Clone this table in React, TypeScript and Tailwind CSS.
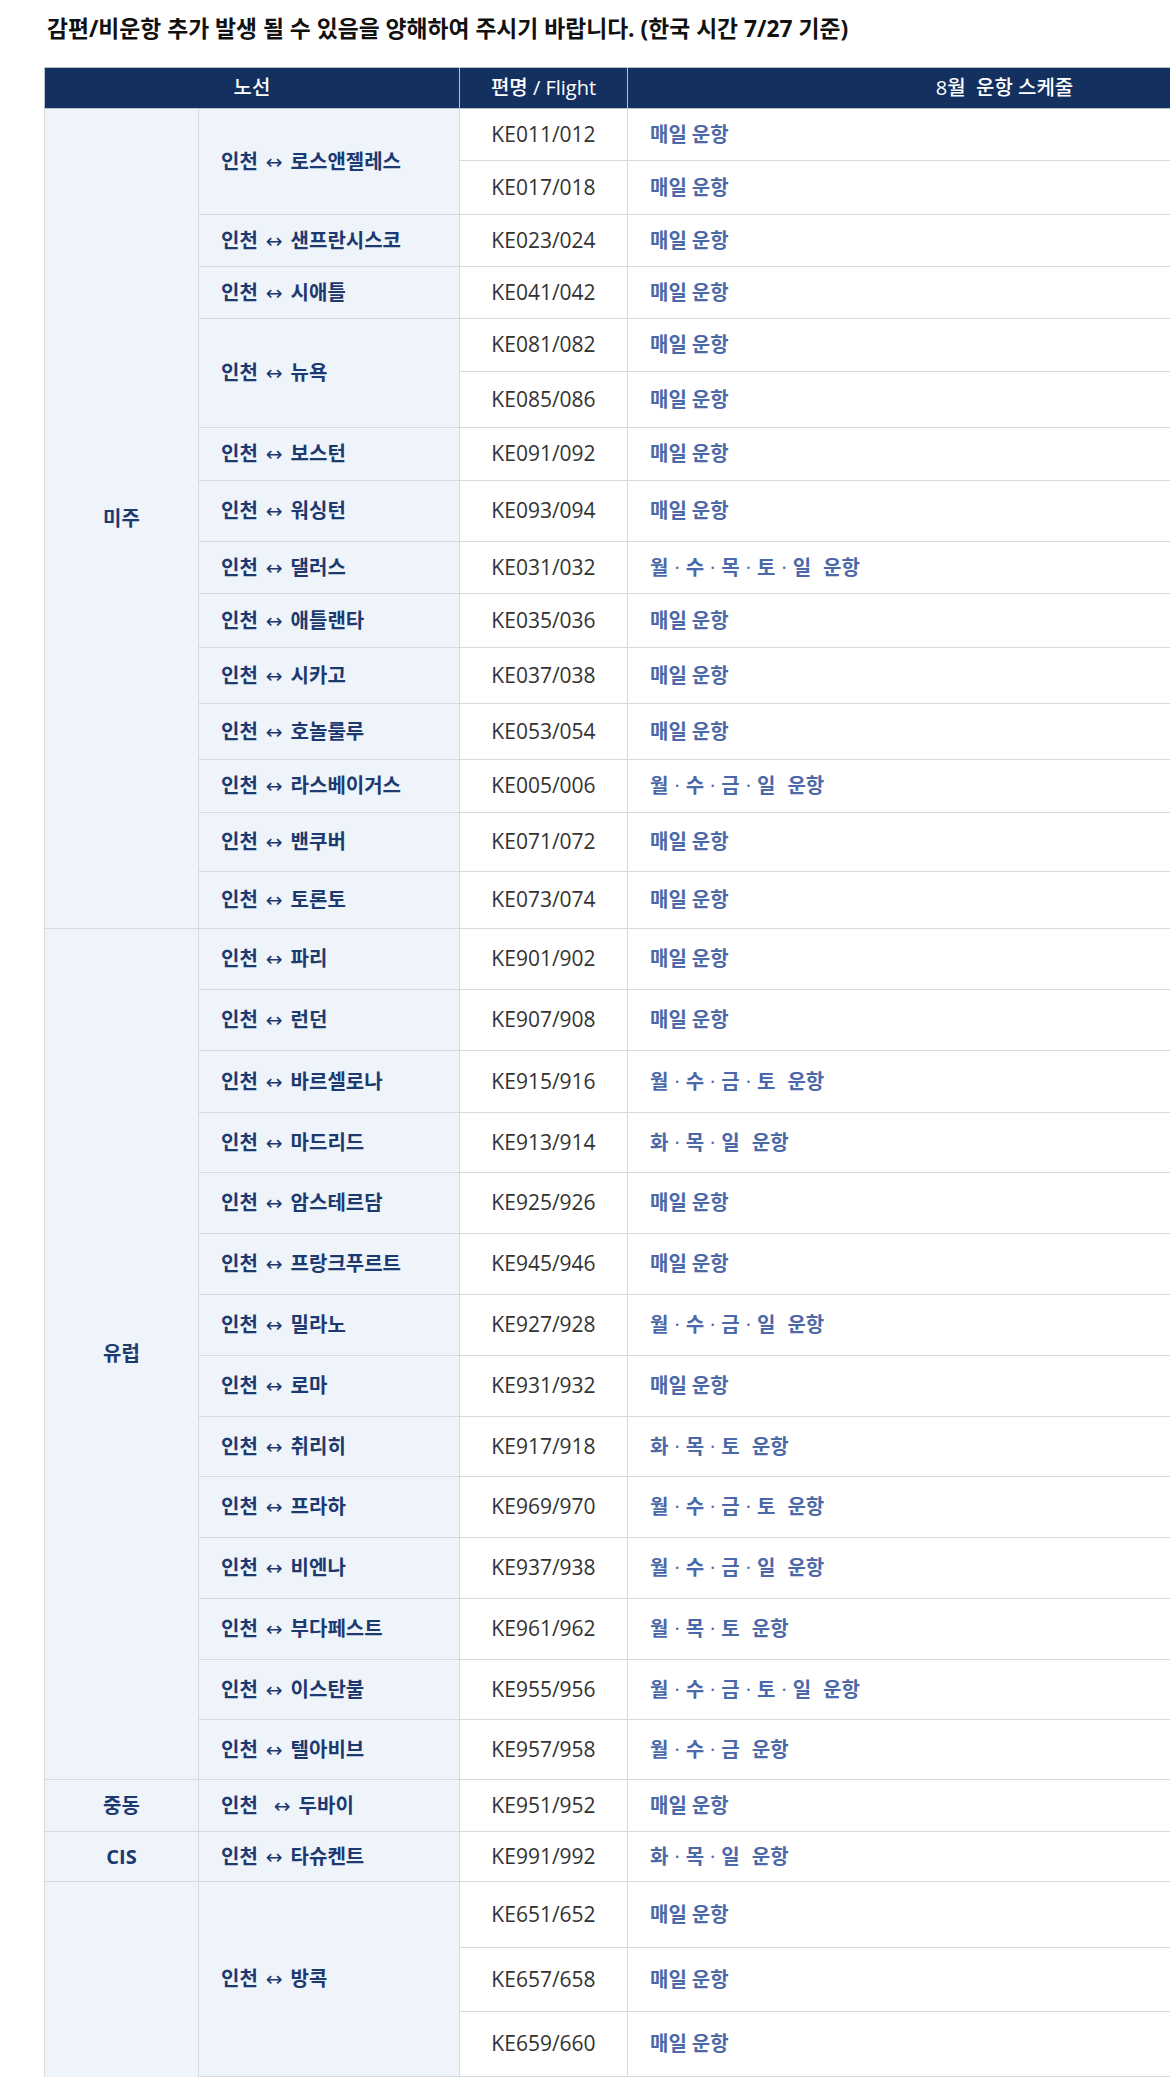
import React from "react";

type Flight = { no: string; sched: string; h: number };
type Route = { name: string; flights: Flight[] };
type Group = { region: string; routes: Route[]; open?: boolean };

const D = "매일 운항";
const f = (no: string, sched: string, h: number): Flight => ({ no, sched, h });
const r = (name: string, ...flights: Flight[]): Route => ({ name, flights });

const groups: Group[] = [
  {
    region: "미주",
    routes: [
      r("인천 ↔ 로스앤젤레스", f("KE011/012", D, 52), f("KE017/018", D, 54)),
      r("인천 ↔ 샌프란시스코", f("KE023/024", D, 52)),
      r("인천 ↔ 시애틀", f("KE041/042", D, 52)),
      r("인천 ↔ 뉴욕", f("KE081/082", D, 53), f("KE085/086", D, 56)),
      r("인천 ↔ 보스턴", f("KE091/092", D, 53)),
      r("인천 ↔ 워싱턴", f("KE093/094", D, 61)),
      r("인천 ↔ 댈러스", f("KE031/032", "월·수·목·토·일 운항", 52)),
      r("인천 ↔ 애틀랜타", f("KE035/036", D, 54)),
      r("인천 ↔ 시카고", f("KE037/038", D, 56)),
      r("인천 ↔ 호놀룰루", f("KE053/054", D, 56)),
      r("인천 ↔ 라스베이거스", f("KE005/006", "월·수·금·일 운항", 53)),
      r("인천 ↔ 밴쿠버", f("KE071/072", D, 59)),
      r("인천 ↔ 토론토", f("KE073/074", D, 57)),
    ],
  },
  {
    region: "유럽",
    routes: [
      r("인천 ↔ 파리", f("KE901/902", D, 61)),
      r("인천 ↔ 런던", f("KE907/908", D, 61)),
      r("인천 ↔ 바르셀로나", f("KE915/916", "월·수·금·토 운항", 62)),
      r("인천 ↔ 마드리드", f("KE913/914", "화·목·일 운항", 60)),
      r("인천 ↔ 암스테르담", f("KE925/926", D, 61)),
      r("인천 ↔ 프랑크푸르트", f("KE945/946", D, 61)),
      r("인천 ↔ 밀라노", f("KE927/928", "월·수·금·일 운항", 61)),
      r("인천 ↔ 로마", f("KE931/932", D, 61)),
      r("인천 ↔ 취리히", f("KE917/918", "화·목·토 운항", 60)),
      r("인천 ↔ 프라하", f("KE969/970", "월·수·금·토 운항", 61)),
      r("인천 ↔ 비엔나", f("KE937/938", "월·수·금·일 운항", 61)),
      r("인천 ↔ 부다페스트", f("KE961/962", "월·목·토 운항", 61)),
      r("인천 ↔ 이스탄불", f("KE955/956", "월·수·금·토·일 운항", 60)),
      r("인천 ↔ 텔아비브", f("KE957/958", "월·수·금 운항", 60)),
    ],
  },
  { region: "중동", routes: [r("인천 ↔ 두바이", f("KE951/952", D, 52))] },
  { region: "CIS", routes: [r("인천 ↔ 타슈켄트", f("KE991/992", "화·목·일 운항", 50))] },
  {
    region: "",
    open: true,
    routes: [r("인천 ↔ 방콕", f("KE651/652", D, 66), f("KE657/658", D, 64), f("KE659/660", D, 65))],
  },
];

const cellB = "border border-[#d7d9dc]";

function RouteName({ name, wide }: { name: string; wide: boolean }) {
  const [a, b] = name.split(" ↔ ");
  return (
    <>
      {a}
      <span
        className={`${wide ? "pl-[16px]" : "pl-[8px]"} pr-[8px] text-[20px] font-normal`}
        style={{ fontFamily: '"DejaVu Sans", sans-serif' }}
      >
        ↔
      </span>
      {b}
    </>
  );
}

function Schedule({ text }: { text: string }) {
  const [days, tail] = text.split(" ");
  const parts = days.split("·");
  return (
    <>
      {parts.map((p, i) => (
        <React.Fragment key={i}>
          {i > 0 && <span className="px-[6px] font-normal">·</span>}
          {p}
        </React.Fragment>
      ))}
      <span className={parts.length > 1 ? "pl-[12px]" : "pl-[5px]"}>{tail}</span>
    </>
  );
}

export default function App() {
  const rows: React.ReactNode[] = [];
  groups.forEach((g, gi) => {
    const total = g.routes.reduce((s, rt) => s + rt.flights.length, 0);
    let first = true;
    g.routes.forEach((rt, ri) => {
      rt.flights.forEach((fl, fi) => {
        rows.push(
          <tr key={`${gi}-${ri}-${fi}`} style={{ height: fl.h }}>
            {first && (
              <td
                rowSpan={total}
                className={`${cellB} ${g.open ? "border-b-0" : ""} bg-[#eef4f9] text-center align-middle font-bold text-[#1d3a70]`}
              >
                {g.region}
              </td>
            )}
            {fi === 0 && (
              <td
                rowSpan={rt.flights.length}
                className={`${cellB} bg-[#eef4f9] pl-[22px] align-middle font-bold text-[#1d3a70] whitespace-nowrap`}
              >
                <RouteName name={rt.name} wide={g.region === "중동"} />
              </td>
            )}
            <td className={`${cellB} text-center align-middle text-[21px] text-[#333333]`}>{fl.no}</td>
            <td className={`${cellB} pl-[22px] align-middle font-semibold text-[#4b68a9] whitespace-nowrap`}>
              <Schedule text={fl.sched} />
            </td>
          </tr>
        );
        first = false;
      });
    });
  });

  return (
    <div
      className="w-[1170px] h-[2092px] overflow-hidden bg-white"
      style={{ fontFamily: '"Open Sans", "Noto Sans CJK KR", sans-serif' }}
    >
      <p className="pl-[47px] pt-[14px] text-[22.8px] leading-[30px] font-bold text-[#111111] whitespace-nowrap">
        감편/비운항 추가 발생 될 수 있음을 양해하여 주시기 바랍니다. (한국 시간 7/27 기준)
      </p>
      <table className="ml-[44px] mt-[23px] w-[1337px] table-fixed border-collapse text-[20px]">
        <colgroup>
          <col className="w-[154px]" />
          <col className="w-[261px]" />
          <col className="w-[168px]" />
          <col className="w-[754px]" />
        </colgroup>
        <thead>
          <tr className="h-[41px] bg-[#14305f] text-white">
            <th colSpan={2} className="border border-[#b9c1cd] font-medium">
              노선
            </th>
            <th className="border border-[#b9c1cd] font-medium">편명 / Flight</th>
            <th className="border border-[#b9c1cd] font-medium whitespace-pre">8월  운항 스케줄</th>
          </tr>
        </thead>
        <tbody>{rows}</tbody>
      </table>
    </div>
  );
}
